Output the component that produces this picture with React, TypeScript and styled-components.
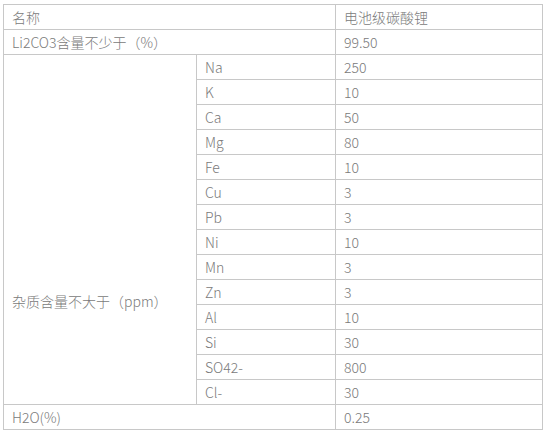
import styled, { createGlobalStyle } from "styled-components";

const GlobalStyle = createGlobalStyle`
  html, body {
    margin: 0;
    padding: 0;
    background: #ffffff;
  }
  body {
    font-family: "Noto Sans CJK SC", "Noto Sans", sans-serif;
  }
`;

const Page = styled.div`
  padding: 4px 6px 0 3px;
`;

const Table = styled.table`
  border-collapse: collapse;
  width: 539px;
  table-layout: fixed;
`;

const Cell = styled.td`
  border: 1px solid #c8c8c8;
  height: 24px;
  padding: 0 8px;
  font-size: 14px;
  font-weight: 300;
  line-height: 24px;
  color: #7a7a7a;
  vertical-align: middle;
  white-space: nowrap;
`;

// the merged label sits low in its block, around the Zn row
const GroupCell = styled(Cell)`
  vertical-align: top;
  padding-top: 234px;
`;

const impurities: [string, string][] = [
  ["Na", "250"],
  ["K", "10"],
  ["Ca", "50"],
  ["Mg", "80"],
  ["Fe", "10"],
  ["Cu", "3"],
  ["Pb", "3"],
  ["Ni", "10"],
  ["Mn", "3"],
  ["Zn", "3"],
  ["Al", "10"],
  ["Si", "30"],
  ["SO42-", "800"],
  ["Cl-", "30"],
];

const App = () => {
  return (
    <Page>
      <GlobalStyle />
      <Table>
        <colgroup>
          <col style={{ width: 193 }} />
          <col style={{ width: 139 }} />
          <col style={{ width: 207 }} />
        </colgroup>
        <tbody>
          <tr>
            <Cell colSpan={2}>名称</Cell>
            <Cell>电池级碳酸锂</Cell>
          </tr>
          <tr>
            <Cell colSpan={2}>Li2CO3含量不少于（%）</Cell>
            <Cell>99.50</Cell>
          </tr>
          {impurities.map(([name, value], i) => (
            <tr key={name}>
              {i === 0 && (
                <GroupCell rowSpan={impurities.length}>
                  杂质含量不大于（ppm）
                </GroupCell>
              )}
              <Cell>{name}</Cell>
              <Cell>{value}</Cell>
            </tr>
          ))}
          <tr>
            <Cell colSpan={2}>H2O(%)</Cell>
            <Cell>0.25</Cell>
          </tr>
        </tbody>
      </Table>
    </Page>
  );
};

export default App;
